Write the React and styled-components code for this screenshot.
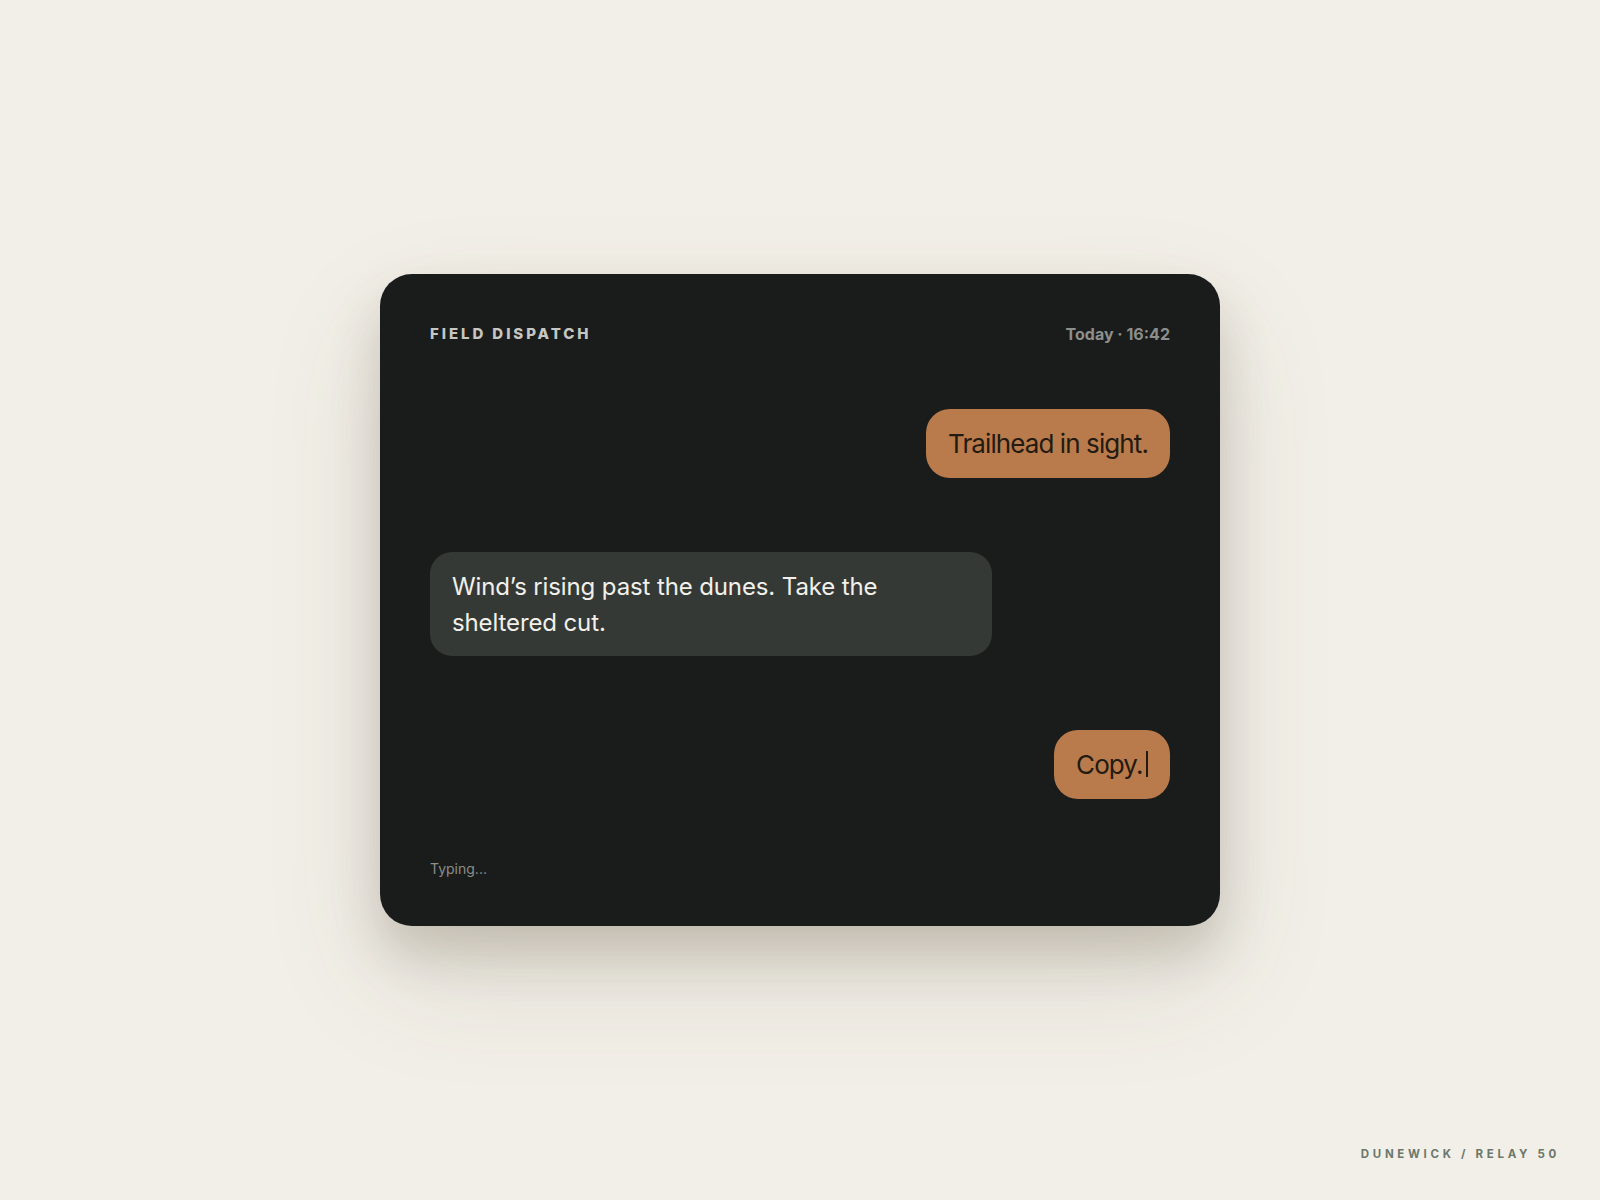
import React from "react";
import styled, { createGlobalStyle } from "styled-components";

const GlobalStyle = createGlobalStyle`
  * { box-sizing: border-box; }
  html, body { margin: 0; padding: 0; }
  body {
    background: #f2efe8;
    font-family: Inter, "Liberation Sans", sans-serif;
    -webkit-font-smoothing: antialiased;
  }
`;

const Page = styled.div`
  min-height: 100vh;
  display: grid;
  grid-template-rows: 1fr auto 1fr;
  justify-items: center;
`;

const Spacer = styled.div``;

const BottomRow = styled.div`
  width: 100%;
  display: flex;
  justify-content: flex-end;
  align-items: flex-end;
  padding: 0 40px 39px 0;
`;

const Signature = styled.div`
  font-family: Inter, "Liberation Sans", sans-serif;
  font-size: 11.5px;
  font-weight: 700;
  letter-spacing: 0.32em;
  color: #6b786c;
  line-height: 14px;
`;

const Card = styled.section`
  width: 840px;
  background: #1a1c1b;
  border-radius: 32px;
  padding: 50px 50px 47px 50px;
  display: flex;
  flex-direction: column;
  box-shadow: 0 28px 50px rgba(70, 60, 40, 0.2), 0 50px 120px rgba(90, 80, 50, 0.13);
`;

const Header = styled.header`
  display: flex;
  justify-content: space-between;
  align-items: center;
  height: 20px;
`;

const Title = styled.h1`
  margin: 0;
  font-size: 15px;
  font-weight: 800;
  letter-spacing: 0.195em;
  color: #c6c7c3;
  line-height: 20px;
`;

const Stamp = styled.time`
  font-size: 16px;
  font-weight: 700;
  color: #8c8f8c;
  line-height: 20px;
`;

const Thread = styled.div`
  display: flex;
  flex-direction: column;
  gap: 74px;
  margin-top: 65px;
`;

const Bubble = styled.div`
  align-self: ${(p) => (p.$out ? "flex-end" : "flex-start")};
  width: ${(p) => (p.$out ? "auto" : "76%")};
  background: ${(p) => (p.$out ? "#b97b4b" : "#353936")};
  color: ${(p) => (p.$out ? "#231a12" : "#f1f0ea")};
  border-radius: ${(p) => (p.$out ? "24px" : "22px")};
  padding: ${(p) => (p.$out ? "15px 22px" : "17px 22px 15px")};
  font-size: ${(p) => (p.$out ? "26px" : "24px")};
  line-height: ${(p) => (p.$out ? "39px" : "36px")};
  letter-spacing: ${(p) => (p.$out ? "-0.035em" : "-0.005em")};
`;

const Caret = styled.span`
  display: inline-block;
  width: 2.5px;
  height: 26px;
  margin-left: 3px;
  background: #231a12;
  vertical-align: -3px;
`;

const Status = styled.div`
  margin-top: 60px;
  font-size: 14px;
  line-height: 20px;
  color: #8a8d89;
`;

export default function App() {
  return (
    <>
      <GlobalStyle />
      <Page>
        <Spacer />
        <Card>
          <Header>
            <Title>FIELD DISPATCH</Title>
            <Stamp>Today · 16:42</Stamp>
          </Header>
          <Thread>
            <Bubble $out>Trailhead in sight.</Bubble>
            <Bubble>
              Wind’s rising past the dunes. Take the
              <br />
              sheltered cut.
            </Bubble>
            <Bubble $out>
              Copy.
              <Caret />
            </Bubble>
          </Thread>
          <Status>Typing...</Status>
        </Card>
        <BottomRow>
          <Signature>DUNEWICK / RELAY 50</Signature>
        </BottomRow>
      </Page>
    </>
  );
}
